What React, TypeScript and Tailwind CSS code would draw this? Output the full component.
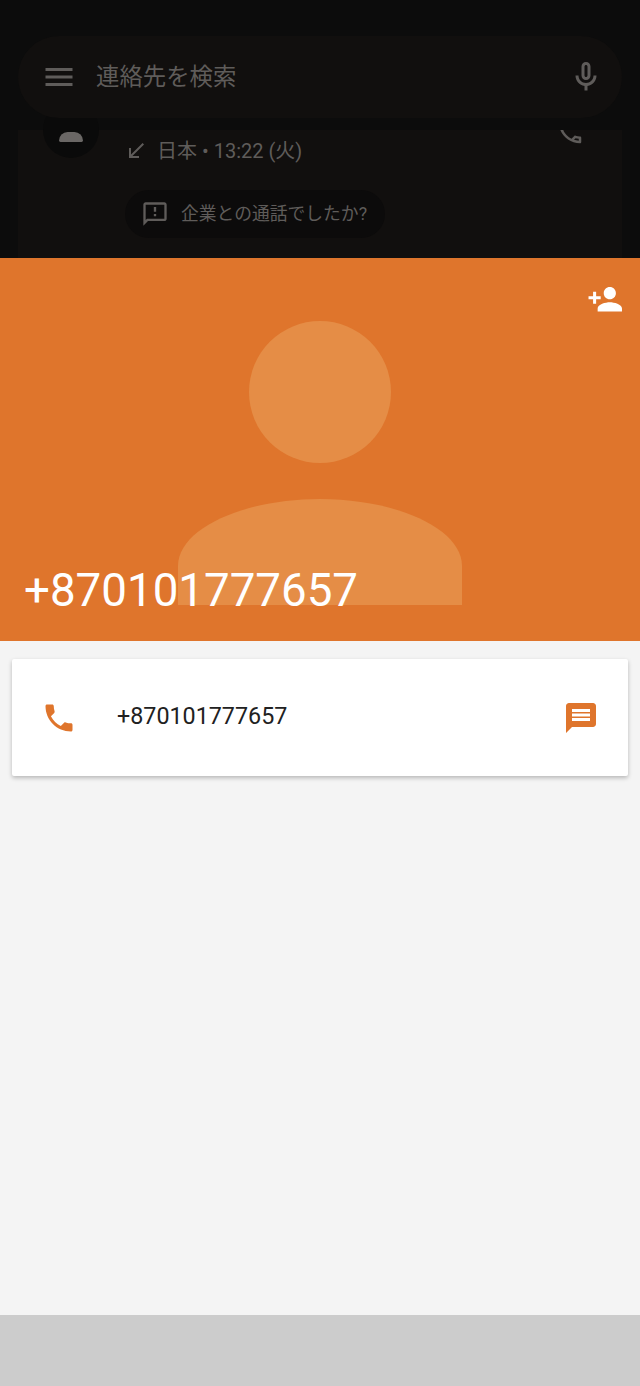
export default function App() {
  const font = { fontFamily: 'Roboto, "Noto Sans CJK JP", sans-serif' };
  return (
    <div style={font} className="flex h-[1386px] w-[640px] flex-col overflow-hidden bg-[#f4f4f4]">
      {/* dimmed list behind the sheet */}
      <div className="relative h-[258px] shrink-0 overflow-hidden bg-[#0c0c0c] px-[18px] pt-[130px]">
        <div className="relative h-[128px] bg-[#110f0e]">
          <div className="absolute left-[25px] top-[-28px] flex h-[56px] w-[56px] items-end justify-center rounded-full bg-[#0a0a0a] pb-[16px]">
            <div className="h-[10px] w-[24px] rounded-t-[12px] rounded-b-[2px] bg-[#6a6765]" />
          </div>
          <div className="absolute left-[537px] top-0 h-[15px] w-[30px] overflow-hidden">
            <svg viewBox="0 0 24 24" className="mt-[-13px] h-[30px] w-[30px] fill-[#5f5c5a]">
              <path d="M6.54 5c.06.89.21 1.76.45 2.59l-1.2 1.2c-.41-1.2-.67-2.47-.76-3.79h1.51m9.86 12.02c.85.24 1.72.39 2.6.45v1.49c-1.32-.09-2.59-.35-3.8-.75l1.2-1.19M7.5 3H4c-.55 0-1 .45-1 1 0 9.39 7.61 17 17 17 .55 0 1-.45 1-1v-3.49c0-.55-.45-1-1-1-1.24 0-2.45-.2-3.57-.57-.1-.04-.21-.05-.31-.05-.26 0-.51.1-.71.29l-2.2 2.2c-2.83-1.45-5.15-3.76-6.59-6.59l2.2-2.2c.28-.28.36-.67.25-1.02C8.7 6.45 8.5 5.25 8.5 4c0-.55-.45-1-1-1z" />
            </svg>
          </div>
          <div className="ml-[106px] flex flex-col items-start">
            <div className="flex h-[42px] items-center">
              <svg viewBox="0 0 24 24" className="h-[24px] w-[24px] fill-[#5f5c5a]">
                <path d="M20 5.41 18.59 4 7 15.59V9H5v10h10v-2H8.41z" />
              </svg>
              <span className="ml-[9px] text-[20px] leading-[28px] text-[#5f5c5a]">日本 • 13:22 (火)</span>
            </div>
            <div className="ml-[1px] mt-[18px] flex h-[48px] w-[260px] items-center rounded-full bg-[#0c0b0b] pl-[16px]">
              <svg viewBox="0 0 24 24" className="h-[28px] w-[28px] fill-[#5f5c5a]">
                <path d="M20 2H4c-1.1 0-1.99.9-1.99 2L2 22l4-4h14c1.1 0 2-.9 2-2V4c0-1.1-.9-2-2-2zm0 14H5.17L4 17.17V4h16v12zM11 12h2v2h-2zm0-6h2v4h-2z" />
              </svg>
              <span className="ml-[12px] text-[17.8px] leading-[24px] text-[#5f5c5a]">企業との通話でしたか?</span>
            </div>
          </div>
        </div>
        {/* search bar over the list */}
        <div className="absolute left-[18px] top-[36px] flex h-[82px] w-[604px] items-center rounded-[41px] bg-[#110f0e] pl-[23px] pr-[18px]">
          <svg viewBox="0 0 24 24" className="h-[36px] w-[36px] fill-[#5f5c5a]">
            <path d="M3 18h18v-2H3v2zm0-5h18v-2H3v2zm0-7v2h18V6H3z" />
          </svg>
          <span className="ml-[19px] flex-1 text-[23.4px] leading-[32px] text-[#5f5c5a]">連絡先を検索</span>
          <svg viewBox="0 0 24 24" className="h-[36px] w-[36px] fill-[#5f5c5a]">
            <path d="M12 14c1.66 0 3-1.34 3-3V5c0-1.66-1.34-3-3-3S9 3.34 9 5v6c0 1.66 1.34 3 3 3zm-1-9c0-.55.45-1 1-1s1 .45 1 1v6c0 .55-.45 1-1 1s-1-.45-1-1V5zm6 6c0 2.76-2.24 5-5 5s-5-2.24-5-5H5c0 3.53 2.61 6.43 6 6.92V21h2v-3.08c3.39-.49 6-3.39 6-6.92h-2z" />
          </svg>
        </div>
      </div>

      {/* orange contact header */}
      <div className="relative flex h-[383px] shrink-0 flex-col justify-between bg-[#df752c] pb-[23px] pl-[24px] pr-[17px] pt-[23px]">
        <svg viewBox="0 0 640 383" className="absolute left-0 top-0 h-[383px] w-[640px] fill-[#e58d46]">
          <circle cx="320" cy="134" r="71" />
          <path d="M178 347V308C178 270 245 241 320 241C395 241 462 270 462 308V347Z" />
        </svg>
        <svg viewBox="0 0 24 24" className="relative h-[36.5px] w-[36.5px] self-end fill-white">
          <path d="M15 12c2.21 0 4-1.79 4-4s-1.79-4-4-4-4 1.79-4 4 1.79 4 4 4zm-9-2V7H4v3H1v2h3v3h2v-3h3v-2H6zm9 4c-2.67 0-8 1.34-8 4v2h16v-2c0-2.66-5.33-4-8-4z" />
        </svg>
        <div className="relative text-[45.7px] leading-[54px] text-white">+870101777657</div>
      </div>

      {/* number card */}
      <div className="flex flex-1 flex-col px-[12px] pt-[18px]">
        <div className="flex h-[117px] items-center rounded-[2px] bg-white pl-[29px] pr-[29px] shadow-[0_2px_4px_rgba(0,0,0,0.25)]">
          <svg viewBox="0 0 24 24" className="h-[36px] w-[36px] fill-[#df752c]">
            <path d="M6.62 10.79c1.44 2.83 3.76 5.14 6.59 6.59l2.2-2.2c.27-.27.67-.36 1.02-.24 1.12.37 2.33.57 3.57.57.55 0 1 .45 1 1V20c0 .55-.45 1-1 1-9.39 0-17-7.61-17-17 0-.55.45-1 1-1h3.5c.55 0 1 .45 1 1 0 1.25.2 2.45.57 3.57.11.35.03.74-.25 1.02l-2.2 2.2z" />
          </svg>
          <span className="mb-[4px] ml-[40px] flex-1 text-[23.3px] leading-[32px] text-[#212121]">+870101777657</span>
          <svg viewBox="0 0 24 24" className="h-[36px] w-[36px] fill-[#df752c]">
            <path d="M20 2H4c-1.1 0-2 .9-2 2v18l4-4h14c1.1 0 2-.9 2-2V4c0-1.1-.9-2-2-2zm-2 12H6v-2h12v2zm0-3H6V9h12v2zm0-3H6V6h12v2z" />
          </svg>
        </div>
      </div>

      {/* bottom bar */}
      <div className="h-[71px] shrink-0 bg-[#cccccc]" />
    </div>
  );
}
